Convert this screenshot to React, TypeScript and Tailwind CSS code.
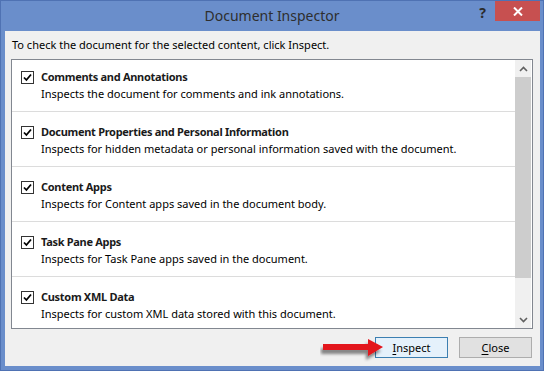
import React from 'react';

const items = [
	{title: 'Comments and Annotations', desc: 'Inspects the document for comments and ink annotations.'},
	{title: 'Document Properties and Personal Information', desc: 'Inspects for hidden metadata or personal information saved with the document.'},
	{title: 'Content Apps', desc: 'Inspects for Content apps saved in the document body.'},
	{title: 'Task Pane Apps', desc: 'Inspects for Task Pane apps saved in the document.'},
	{title: 'Custom XML Data', desc: 'Inspects for custom XML data stored with this document.'},
];

const Checkbox = () => (
	<div className="flex h-[13px] w-[13px] shrink-0 items-center justify-center border border-[#333] bg-white">
		<svg width="9" height="9" viewBox="0 0 9 9">
			<path d="M1 4.5 L3.4 7 L8 1.5" fill="none" stroke="#000" strokeWidth="1.8" />
		</svg>
	</div>
);

const Chevron = ({down}: {down?: boolean}) => (
	<svg width="9" height="6" viewBox="0 0 9 6">
		<path d={down ? 'M1 1 L4.5 4.5 L8 1' : 'M1 5 L4.5 1.5 L8 5'} fill="none" stroke="#606060" strokeWidth="1.6" />
	</svg>
);

export default function App() {
	return (
		<div
			className="flex h-[371px] w-[544px] flex-col border border-[#4f72b3] bg-[#6a8ecb] text-[11px] text-black"
			style={{fontFamily: '"Noto Sans", "Open Sans", sans-serif'}}
		>
			{/* title bar */}
			<div className="grid h-[30px] shrink-0 grid-cols-[1fr_auto_1fr]">
				<div />
				<div className="pt-[3px] text-[14px] leading-[24px] text-[#2e2e2e]">Document Inspector</div>
				<div className="flex items-start justify-end pr-[3px]">
					<span className="mr-[9px] mt-[2px] text-[14px] font-bold leading-[20px] text-[#2b2b2b]">?</span>
					<div className="flex h-[20px] w-[45px] items-center justify-center bg-[#c75050]">
						<svg width="10" height="9" viewBox="0 0 10 9">
							<path d="M1 0.5 L9 8.5 M9 0.5 L1 8.5" stroke="#fff" strokeWidth="2" />
						</svg>
					</div>
				</div>
			</div>

			{/* client area */}
			<div className="ml-[4px] mr-[3px] mb-[4px] flex flex-1 flex-col bg-[#f0f0f0] pt-[6px] pb-[8px]">
				<p className="pl-[7px] leading-[16px]">To check the document for the selected content, click Inspect.</p>

				<div className="ml-[6px] mt-[6px] flex h-[270px] w-[522px] border border-[#828790] bg-white">
					<div className="flex-1 overflow-hidden">
						<div className="-mt-[3px]">
							{items.map((it, i) => (
								<div
									key={it.title}
									className={`h-[55px] pl-[9px] pt-[12px] ${i < items.length - 1 ? 'border-b border-[#dcdcdc]' : ''}`}
								>
									<div className="flex h-[17px] items-center gap-[7px]">
										<Checkbox />
										<span className="-mt-[2px] font-bold leading-[17px] tracking-[-0.3px] text-[#1a1a1a]">{it.title}</span>
									</div>
									<div className="-mt-[1px] pl-[20px] leading-[18px]">{it.desc}</div>
								</div>
							))}
						</div>
					</div>
					<div className="mr-[1px] flex w-[16px] flex-col bg-[#f0f0f0]">
						<div className="flex h-[17px] items-center justify-center">
							<Chevron />
						</div>
						<div className="h-[201px] bg-[#cdcdcd]" />
						<div className="flex-1" />
						<div className="flex h-[17px] items-center justify-center">
							<Chevron down />
						</div>
					</div>
				</div>

				<div className="relative mt-[8px] flex justify-end gap-[11px] pr-[8px]">
					<svg className="absolute left-[315px] top-[-1px]" width="66" height="26" viewBox="0 0 66 26">
						<defs>
							<filter id="sh" x="-20%" y="-40%" width="140%" height="200%">
								<feDropShadow dx="-2" dy="4" stdDeviation="1.6" floodColor="#000" floodOpacity="0.45" />
							</filter>
						</defs>
						<path d="M3 8 L48 8 L48 3 L63 11 L48 20 L48 14 L3 14 Z" fill="#e3141b" filter="url(#sh)" />
					</svg>
					<button className="h-[21px] w-[73px] border border-[#3c7fb1] bg-[#e5f1fb] leading-[19px]">
						<span className="underline underline-offset-2">I</span>nspect
					</button>
					<button className="h-[21px] w-[73px] border border-[#adadad] bg-[#e1e1e1] leading-[19px]">
						<span className="underline underline-offset-2">C</span>lose
					</button>
				</div>
			</div>
		</div>
	);
}
